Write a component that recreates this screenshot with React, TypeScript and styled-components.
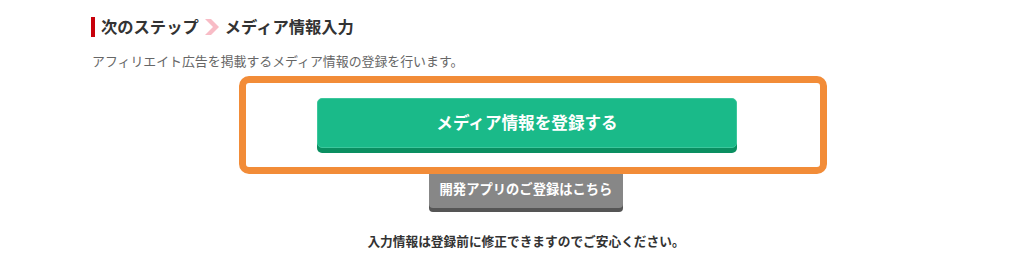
import React from "react";
import styled, { createGlobalStyle } from "styled-components";

const Global = createGlobalStyle`
  html, body { margin: 0; padding: 0; background: #ffffff; }
  body { font-family: "Noto Sans CJK JP", "Noto Sans", sans-serif; }
`;

const Page = styled.div`
  width: 870px;
  padding: 16px 0 0 91px;
  display: flex;
  flex-direction: column;
`;

const Heading = styled.h2`
  margin: 0;
  display: flex;
  align-items: center;
  height: 20px;
  font-size: 16.3px;
  line-height: 20px;
  font-weight: 700;
  color: #333333;
`;

const Bar = styled.span`
  display: block;
  width: 4px;
  height: 20px;
  margin: 2px 6px 0 0;
  background: #c8000b;
`;

const Chevron = styled.svg`
  display: block;
  width: 14px;
  height: 16px;
  margin: 2px 6px 0 6px;
`;

const Lead = styled.p`
  margin: 16px 0 0 1px;
  font-size: 12.9px;
  line-height: 18px;
  color: #666666;
`;

const HighlightRow = styled.div`
  margin-top: 6px;
  padding-left: 14px;
  display: flex;
  justify-content: center;
`;

const Highlight = styled.div`
  box-sizing: border-box;
  width: 588px;
  border: 7px solid #f28c38;
  border-radius: 10px;
  padding: 15px 83px 19px 71px;
`;

const PrimaryButton = styled.button`
  box-sizing: border-box;
  display: flex;
  align-items: center;
  justify-content: center;
  width: 420px;
  height: 50px;
  border: 1px solid #3cc79c;
  border-radius: 5px;
  background: #1aba89;
  box-shadow: 0 5px 0 #0a8f61;
  color: #ffffff;
  font-family: inherit;
  font-size: 16.6px;
  font-weight: 700;
  padding: 0 0 2px 0;
  cursor: pointer;
`;

const SecondaryButton = styled.button`
  box-sizing: border-box;
  align-self: center;
  display: flex;
  align-items: center;
  justify-content: center;
  width: 194px;
  height: 34px;
  border: none;
  border-radius: 0 0 4px 4px;
  background: #878787;
  box-shadow: 0 4px 0 #555555;
  color: #ffffff;
  font-family: inherit;
  font-size: 13.3px;
  font-weight: 700;
  padding: 0 0 6px 0;
  cursor: pointer;
`;

const Note = styled.p`
  margin: 24px 0 0 0;
  text-align: center;
  font-size: 12.7px;
  line-height: 18px;
  font-weight: 700;
  color: #333333;
`;

export default function App() {
  return (
    <>
      <Global />
      <Page>
        <Heading>
          <Bar />
          次のステップ
          <Chevron viewBox="0 0 14 16">
            <polygon points="0,0 6,0 14,8 6,16 0,16 8,8" fill="#f8bcc6" />
          </Chevron>
          メディア情報入力
        </Heading>
        <Lead>アフィリエイト広告を掲載するメディア情報の登録を行います。</Lead>
        <HighlightRow>
          <Highlight>
            <PrimaryButton>メディア情報を登録する</PrimaryButton>
          </Highlight>
        </HighlightRow>
        <SecondaryButton>開発アプリのご登録はこちら</SecondaryButton>
        <Note>入力情報は登録前に修正できますのでご安心ください。</Note>
      </Page>
    </>
  );
}
